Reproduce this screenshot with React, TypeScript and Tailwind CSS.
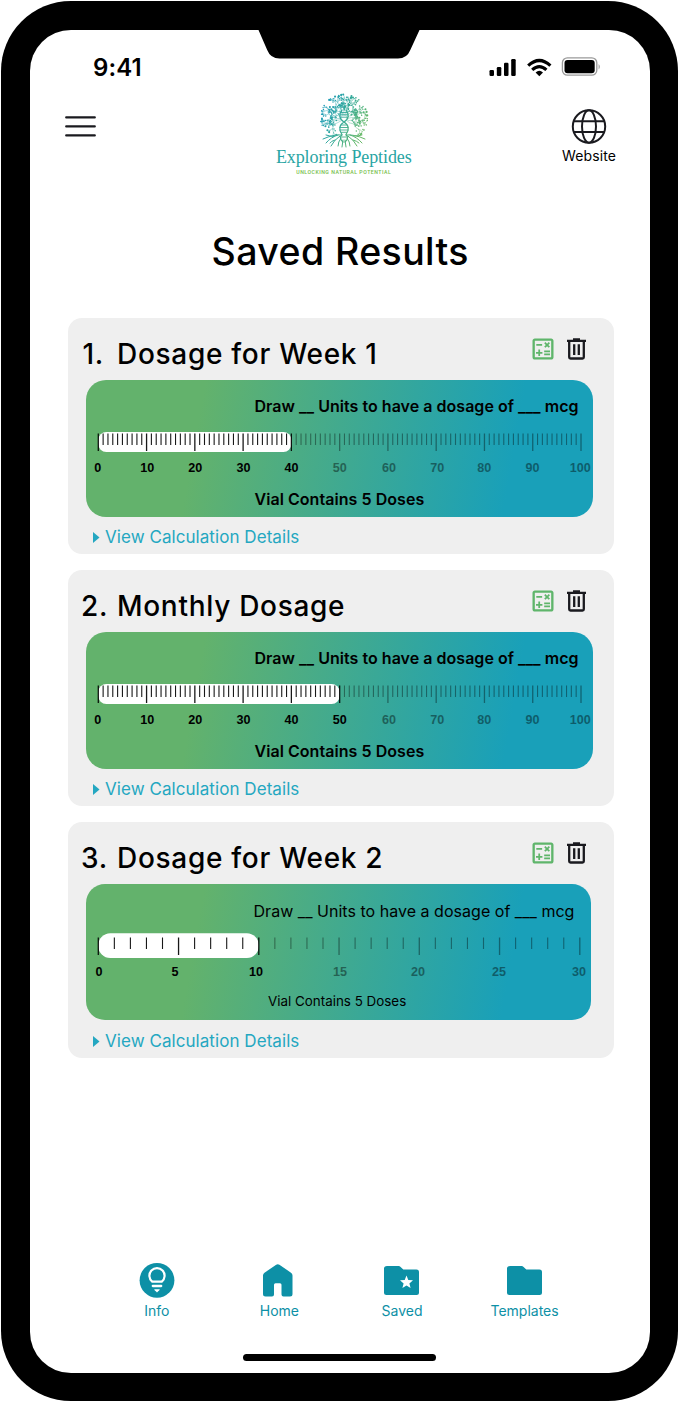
import React from "react";
import { MdOutlineCalculate } from "react-icons/md";

type Point = { x: number; y: number };
type Scale = {
  max: number;
  filled: number;
  start: number;
  end: number;
  minorStep: number;
  majorStep: number;
  fillTop: number;
  fillHeight: number;
  fillRadius: number;
  labels: { text: string; x: number }[];
};
type Result = {
  index: string;
  indexPad: string;
  title: string;
  scale: Scale;
  compact?: boolean;
};

const hundred = (filled: number): Scale => ({
  max: 100,
  filled,
  start: 12.3,
  end: 495,
  minorStep: 1,
  majorStep: 10,
  fillTop: 52,
  fillHeight: 20,
  fillRadius: 8,
  labels: [11.8, 61.2, 109.2, 157.4, 205.4, 253.8, 303, 351.3, 398.2, 446.4, 494.3].map(
    (x, i) => ({ text: String(i * 10), x }),
  ),
});

const results: Result[] = [
  {
    index: "1.",
    indexPad: "pl-[15px]",
    title: "Dosage for Week 1",
    scale: hundred(40),
  },
  {
    index: "2.",
    indexPad: "pl-[13.5px]",
    title: "Monthly Dosage",
    scale: hundred(50),
  },
  {
    index: "3.",
    indexPad: "pl-[13.5px]",
    title: "Dosage for Week 2",
    compact: true,
    scale: {
      max: 30,
      filled: 10,
      start: 12.3,
      end: 493.8,
      minorStep: 1,
      majorStep: 5,
      fillTop: 49.3,
      fillHeight: 24.7,
      fillRadius: 12,
      labels: [13, 89, 170, 254, 332, 413, 493].map((x, i) => ({ text: String(i * 5), x })),
    },
  },
];

function Ruler({ scale }: { scale: Scale }) {
  const unit = (scale.end - scale.start) / scale.max;
  const ticks: React.ReactNode[] = [];
  for (let v = 0; v <= scale.max; v += scale.minorStep) {
    const major = v % scale.majorStep === 0;
    ticks.push(
      <path
        key={v}
        d={`M${scale.start + v * unit} 53.5v${major ? 17.5 : 11.5}`}
        stroke="#000"
        strokeWidth={major ? 1.3 : 1.1}
        opacity={v <= scale.filled ? 0.9 : 0.38}
      />,
    );
  }
  return (
    <svg className="absolute inset-0 overflow-visible" width="508" height="137" viewBox="0 0 508 137">
      <rect
        x={scale.start}
        y={scale.fillTop}
        width={scale.filled * unit}
        height={scale.fillHeight}
        rx={scale.fillRadius}
        fill="#fff"
      />
      {ticks}
      {scale.labels.map((l, i) => (
        <text
          key={l.text}
          x={l.x}
          y={92}
          textAnchor="middle"
          fontFamily="Liberation Sans, Arial, sans-serif"
          fontWeight="700"
          fontSize="12.6"
          opacity={i * scale.majorStep <= scale.filled ? 1 : 0.42}
        >
          {l.text}
        </text>
      ))}
    </svg>
  );
}

function TrashIcon() {
  return (
    <svg width="19" height="22" viewBox="0 0 19 22" fill="none" stroke="#1a1a1f" strokeWidth="2.3">
      <path d="M0 2.8H19M6 1.4H13" />
      <path d="M2.2 3V19.2Q2.2 20.5 3.5 20.5H15.5Q16.8 20.5 16.8 19.2V3" />
      <path d="M7.2 6.2V17M11.8 6.2V17" />
    </svg>
  );
}

function ResultCard({ result }: { result: Result }) {
  const { compact } = result;
  return (
    <section className="flex h-[236px] w-[546px] flex-col rounded-[14px] bg-[#efefef]">
      <div className="flex h-[62px] items-start">
        <h2 className="flex w-full pt-[19px] text-[28px] font-medium leading-[34px] tracking-[0.7px]">
          <span className={`w-[49.5px] shrink-0 ${result.indexPad}`}>{result.index}</span>
          <span className="whitespace-nowrap">{result.title}</span>
        </h2>
        <div className="flex shrink-0 items-start gap-[10px] pr-[28px] pt-[17px]">
          <MdOutlineCalculate className="h-7 w-7 text-[#5fb56b]" />
          <div className="pt-[3px]">
            <TrashIcon />
          </div>
        </div>
      </div>
      <div
        className={`relative ml-[18.5px] shrink-0 bg-[linear-gradient(100deg,#63b26c_22.5%,#19a0b9_83%)] ${
          compact ? "h-[136px] w-[504.5px] rounded-[19px]" : "h-[137px] w-[507.4px] rounded-[20px]"
        }`}
      >
        <Ruler scale={result.scale} />
        <div className={`flex flex-col ${compact ? "pl-[167.5px]" : "pl-[168.5px]"}`}>
          <p className={`h-[110px] whitespace-nowrap text-[16px] leading-[22px] tracking-[0.03px] ${compact ? "pt-4" : "pt-[15px] font-semibold"}`}>
            Draw __ Units to have a dosage of ___ mcg
          </p>
          <p
            className={`whitespace-nowrap ${
              compact ? "-mt-px pl-[14.5px] text-[13.4px] leading-[16px]" : "-mt-[2px] text-[16px] font-semibold leading-[22px] tracking-[0.05px]"
            }`}
          >
            Vial Contains 5 Doses
          </p>
        </div>
      </div>
      <a className={`flex items-center pl-[25.5px] text-[17px] font-normal leading-[22px] tracking-[0.06px] text-[#24a7c1] ${compact ? "pt-[10px]" : "pt-[9px]"}`}>
        <svg width="7" height="11" viewBox="0 0 7 11">
          <path d="M0 0L6.5 5.5L0 11Z" fill="#24a7c1" />
        </svg>
        <span className="ml-[5px]">View Calculation Details</span>
      </a>
    </section>
  );
}

/* Deterministic branching crown: limbs fork three times and end in leaf dots. */
function buildCrown() {
  const lines: string[] = [];
  const dots: (Point & { r: number })[] = [];
  let seed = 17;
  const rnd = () => {
    seed = (seed * 16807) % 2147483647;
    return seed / 2147483647;
  };
  /* Keeps every node inside the round outline of the crown. */
  const clamp = (x: number, y: number): Point => {
    const dx = x - 68;
    const dy = y - 23;
    const d = Math.hypot(dx, dy);
    const max = 23.4;
    return d > max ? { x: 68 + (dx / d) * max, y: 23 + (dy / d) * max } : { x, y };
  };
  const grow = (x: number, y: number, angle: number, len: number, depth: number) => {
    const end = clamp(x + Math.cos(angle) * len, y + Math.sin(angle) * len);
    const bend = (rnd() - 0.5) * 3;
    lines.push(
      `M${x.toFixed(1)} ${y.toFixed(1)}Q${((x + end.x) / 2 + bend).toFixed(1)} ${((y + end.y) / 2 - bend).toFixed(1)} ${end.x.toFixed(1)} ${end.y.toFixed(1)}`,
    );
    if (depth === 0) {
      dots.push({ ...end, r: 0.6 + rnd() * 0.5 });
      return;
    }
    const leaf = clamp(end.x + rnd() * 5 - 2.5, end.y + rnd() * 5 - 2.5);
    dots.push({ ...leaf, r: 0.75 });
    grow(end.x, end.y, angle - 0.2 - rnd() * 0.75, len * (0.6 + rnd() * 0.25), depth - 1);
    grow(end.x, end.y, angle + 0.2 + rnd() * 0.75, len * (0.6 + rnd() * 0.25), depth - 1);
  };
  for (let i = 0; i < 15; i++) {
    const a = Math.PI * (0.86 + (i / 14) * 1.28);
    grow(68 + Math.cos(a) * 3, 24 + Math.sin(a) * 4, a, i % 2 ? 4.8 : 8, 3);
  }
  return { path: lines.join(""), dots };
}
const crown = buildCrown();

function TreeLogo() {
  return (
    <svg className="overflow-visible" width="136" height="54" viewBox="0 0 136 54" fill="none">
      <defs>
        <linearGradient id="tree" gradientUnits="userSpaceOnUse" x1="46" y1="14" x2="88" y2="34">
          <stop stopColor="#1b9bb8" />
          <stop offset=".5" stopColor="#35aa98" />
          <stop offset="1" stopColor="#65b866" />
        </linearGradient>
      </defs>
      <g stroke="url(#tree)" strokeLinecap="round">
        <path d={crown.path} strokeWidth=".4" />
        <path
          d="M66 15C62.5 19 63 24 68 27C73 30 73.5 35 70 39.5M70 15C73.5 19 73 24 68 27C63 30 62.5 35 66 39.5M66 39.5C63 43 65 45 67 47M70 39.5C73 43 71 45 69 47"
          strokeWidth="1.2"
        />
        <path d="M65 17.5H71M64.5 19.8H71.5M64.7 22.2H71.3M65 30H71M64 32.5H72M63.8 35H72.2M65 37.3H71M66 42H70" strokeWidth=".9" />
        <path
          d="M66 40Q58 39 47 44M62 40Q55 42 50 48M58 41.5Q53 41 50 40M64 41Q58 45 55 51M59 45Q55 46 54 48M65 43Q62 47 62 51M67 45L66 52M70 40Q78 39 89 44M74 40Q81 42 86 48M78 41Q83 41 86 40M72 41Q78 45 81 51M77 45Q81 46 83 48M71 43Q74 47 74 51M69 45L70 52"
          strokeWidth="1"
        />
      </g>
      {crown.dots.map((d, i) => (
        <circle key={i} cx={d.x} cy={d.y} r={d.r} fill="url(#tree)" />
      ))}
    </svg>
  );
}

function StatusBar() {
  return (
    <div className="flex h-[53px] items-start justify-between pl-[63px] pr-[48px] pt-[23px]">
      <span className="text-[24px] font-semibold leading-[30px] tracking-[0.1px]">9:41</span>
      <svg className="mt-[3px]" width="113" height="22" viewBox="0 0 113 22">
        <rect x="0.5" y="14" width="4.5" height="6" rx="1.2" />
        <rect x="7.8" y="11" width="4.5" height="9" rx="1.2" />
        <rect x="15" y="6.8" width="4.5" height="13.2" rx="1.2" />
        <rect x="22.2" y="3" width="4.5" height="17" rx="1.2" />
        <g fill="none" stroke="#000" strokeWidth="3.2">
          <path d="M39.2 9.6Q50.3 -0.6 61.4 9.6" />
          <path d="M43.2 13.9Q50.3 7.4 57.4 13.9" />
        </g>
        <path d="M46.6 16.4Q50.3 13 54 16.4L50.3 20.2Z" />
        <rect x="73.4" y="1.8" width="34.4" height="17.4" rx="5" fill="none" stroke="#000" strokeOpacity=".4" strokeWidth="1.3" />
        <rect x="75.5" y="4" width="30.2" height="13.2" rx="3" />
        <path d="M109.6 8Q112 10.7 109.6 13.6Z" opacity=".4" />
      </svg>
    </div>
  );
}

function Header() {
  return (
    <header className="flex h-[120px] items-start justify-between pl-[35px] pr-[33px]">
      <svg className="mt-[32px]" width="31" height="23" viewBox="0 0 31 23" stroke="#1a1a1f" strokeWidth="2.2" strokeLinecap="round">
        <path d="M1.2 2.4H29.8M1.2 11.4H29.8M1.2 20.4H29.8" />
      </svg>
      <div className="ml-[31px] mt-[12px] flex w-[160px] flex-col items-center whitespace-nowrap">
        <TreeLogo />
        <div className="-mt-[2px] font-['Liberation_Serif',serif] text-[18px] leading-[20px] tracking-[-0.1px] text-[#29a5a3]">Exploring Peptides</div>
        <div className="mt-[1px] font-[Roboto,sans-serif] text-[5.2px] font-medium leading-[8px] tracking-[0.5px] text-[#74bd47]">UNLOCKING NATURAL POTENTIAL</div>
      </div>
      <div className="mt-[26px] flex w-[56px] flex-col items-center">
        <svg width="36" height="36" viewBox="0 0 36 36" fill="none" stroke="#1a1a1f" strokeWidth="2">
          <circle cx="18" cy="17.5" r="16.2" />
          <ellipse cx="18" cy="17.5" rx="7" ry="16.2" />
          <path d="M2.8 12.2H33.2M2.8 23H33.2" />
        </svg>
        <span className="mt-[1px] pl-px text-[14px] leading-[20px] tracking-[0.1px]">Website</span>
      </div>
    </header>
  );
}

const folder = "M3 1H14.5Q15.8 1 16.6 1.9L19.3 4.6H32.5Q35 4.6 35 7.1V27.5Q35 30 32.5 30H2.5Q0 30 0 27.5V3.5Q0 1 3 1Z";

const navItems = [
  {
    label: "Info",
    icon: (
      <svg width="36" height="36" viewBox="0 0 36 36" fill="none">
        <circle cx="18" cy="18.3" r="17.4" fill="#0d90a6" />
        <path d="M13.2 19.6A7.6 7.6 0 1 1 22.8 19.6Z" stroke="#fff" strokeWidth="2.2" strokeLinejoin="round" />
        <path d="M13.8 24H22.2" stroke="#fff" strokeWidth="2.3" strokeLinecap="round" />
        <path d="M15.2 27.3H20.8Q20.4 28.8 19.2 29.2L18 30.4L16.8 29.2Q15.6 28.8 15.2 27.3Z" fill="#fff" />
      </svg>
    ),
  },
  {
    label: "Home",
    icon: (
      <svg className="mr-[3px]" width="30" height="36" viewBox="0 0 30 36" fill="#0d90a6">
        <path d="M13.2 2.8Q14.8 1.8 16.4 2.8L28 10.7Q29.5 11.8 29.5 13.5V32Q29.5 34.5 27 34.5H20.5Q18.5 34.5 18.5 32.5V22.8Q18.5 21.3 17 21.3H12.5Q11 21.3 11 22.8V32.5Q11 34.5 9 34.5H2.5Q0 34.5 0 32V13.5Q0 11.8 1.5 10.7Z" />
      </svg>
    ),
  },
  {
    label: "Saved",
    icon: (
      <svg width="35" height="31" viewBox="0 0 35 31" fill="#0d90a6">
        <path d={folder} />
        <path d="M22.5 10.6L24.3 15L29 15.3L25.4 18.4L26.6 23L22.5 20.5L18.4 23L19.6 18.4L16 15.3L20.7 15Z" fill="#fff" />
      </svg>
    ),
  },
  {
    label: "Templates",
    icon: (
      <svg width="35" height="31" viewBox="0 0 35 31" fill="#0d90a6">
        <path d={folder} />
      </svg>
    ),
  },
];

export default function App() {
  return (
    <div className="h-[1401px] w-[678px] overflow-hidden bg-white pl-px pt-px font-[Inter,sans-serif] text-black [font-optical-sizing:none]">
      <div className="h-[1400px] w-[677px] rounded-[70px] bg-black pl-[29px] pt-[29px]">
        <main className="relative flex h-[1342.5px] w-[619.5px] flex-col rounded-[41px] bg-white">
          <svg className="absolute left-[228px] top-[-1px]" width="163" height="31" viewBox="0 0 163 31">
            <path d="M0.5 0V1L9.2 21Q12.5 29.5 21.5 29.5H140Q149 29.5 152.3 21L161.5 1V0Z" />
          </svg>
          <StatusBar />
          <Header />
          <h1 className="h-[115px] pl-px pt-[25.5px] text-center text-[37.5px] font-medium leading-[46px] tracking-[0.4px]">Saved Results</h1>
          <div className="flex flex-col gap-4 pl-[37.5px]">
            {results.map((r) => (
              <ResultCard key={r.index} result={r} />
            ))}
          </div>
          <nav className="ml-[65.5px] mt-[204px] grid w-[490.4px] grid-cols-4 text-[#0d90a6]">
            {navItems.map((n) => (
              <a key={n.label} className="flex flex-col items-center">
                <span className="flex h-9 items-center">{n.icon}</span>
                <span className="mt-[3px] text-[14px] leading-[20px]">{n.label}</span>
              </a>
            ))}
          </nav>
          <div className="ml-[213px] mt-[33px] h-[7px] w-[193px] rounded-full bg-black" />
        </main>
      </div>
    </div>
  );
}
